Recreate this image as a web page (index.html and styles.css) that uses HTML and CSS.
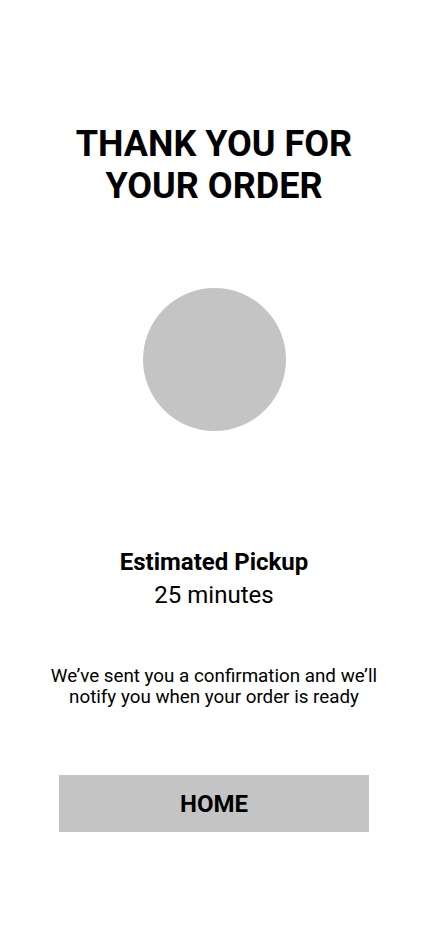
FILE: index.html
```html
<!DOCTYPE html>
<html>
<head>
<meta charset="utf-8">
<link rel="stylesheet" href="styles.css">
</head>
<body>
<main class="screen">
  <h1 class="title">THANK YOU FOR<br>YOUR ORDER</h1>
  <div class="circle"></div>
  <section class="pickup">
    <div class="pickup-label">Estimated Pickup</div>
    <div class="pickup-time">25 minutes</div>
  </section>
  <p class="note">We’ve sent you a confirmation and we’ll<br>notify you when your order is ready</p>
  <button class="home-btn">HOME</button>
</main>
</body>
</html>
```
FILE: styles.css
```css
* { box-sizing: border-box; }
html, body { margin: 0; padding: 0; background: #fff; }
body { font-family: Roboto, "Liberation Sans", sans-serif; color: #000; }
.screen {
  width: 428px;
  height: 926px;
  display: flex;
  flex-direction: column;
  align-items: center;
  padding-top: 123px;
}
.title {
  margin: 0;
  font-size: 36px;
  line-height: 42px;
  font-weight: 700;
  text-align: center;
}
.circle {
  margin-top: 81px;
  width: 143px;
  height: 143px;
  border-radius: 50%;
  background: #c4c4c4;
}
.pickup {
  margin-top: 115px;
  text-align: center;
}
.pickup-label { font-size: 24px; font-weight: 700; line-height: 33px; }
.pickup-time { font-size: 24px; font-weight: 400; line-height: 33px; }
.note {
  margin: 54px 0 0;
  font-size: 18.8px;
  line-height: 21px;
  text-align: center;
}
.home-btn {
  margin-top: 67px;
  width: 310px;
  height: 57px;
  border: 0;
  background: #c4c4c4;
  font-family: Roboto, "Liberation Sans", sans-serif;
  font-weight: 700;
  font-size: 24px;
  color: #000;
  padding: 0;
}
```
